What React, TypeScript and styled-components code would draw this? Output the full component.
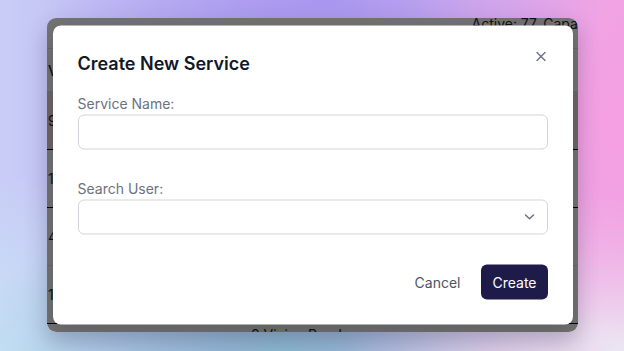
import styled, { createGlobalStyle } from 'styled-components';

const GlobalStyle = createGlobalStyle`
    html, body {
        margin: 0;
        height: 100%;
    }
    body {
        font-family: Inter, "Noto Sans", sans-serif;
        overflow: hidden;
    }
    #root {
        height: 100%;
    }
`;

const rows = [
    { time: '9:12', stop: '14 Harbour Lane', tint: true, line: 'dark' },
    { time: '1:40', stop: '22 Elm Street', tint: false, line: 'dark' },
    { time: '4:05', stop: '3 Mill Road', tint: false, line: 'light' },
    { time: '1:55', stop: '57 Queens Avenue', tint: false, line: 'dark' },
];

export default function App() {
    return (
        <Backdrop>
            <GlobalStyle />
            <AppWindow>
                <StatusBar>
                    <StatusText>Active: 77, Capacity: 120</StatusText>
                </StatusBar>
                <TableHead>
                    <Cell>Vehicle</Cell>
                    <Cell>Address</Cell>
                </TableHead>
                {rows.map(row => (
                    <TableRow key={row.time} $tint={row.tint} $line={row.line}>
                        <Cell>{row.time}</Cell>
                        <Cell>{row.stop}</Cell>
                    </TableRow>
                ))}
                <LastRow>
                    <Cell />
                    <Cell>8 Vivian Road</Cell>
                </LastRow>

                <Dimmer />

                <Dialog>
                    <DialogHeader>
                        <Title>Create New Service</Title>
                        <CloseButton aria-label="Close">
                            <svg width="10" height="10" viewBox="0 0 10 10">
                                <path d="M1 1L9 9M9 1L1 9" stroke="#6b7280" strokeWidth="1.4" strokeLinecap="round" />
                            </svg>
                        </CloseButton>
                    </DialogHeader>

                    <Field>
                        <Label>Service Name:</Label>
                        <TextInput />
                    </Field>

                    <Field>
                        <Label>Search User:</Label>
                        <SelectBox>
                            <svg width="11" height="7" viewBox="0 0 11 7">
                                <path d="M1.5 1.5L5.5 5.2L9.5 1.5" stroke="#6b7280" strokeWidth="1.5" fill="none" strokeLinecap="round" strokeLinejoin="round" />
                            </svg>
                        </SelectBox>
                    </Field>

                    <Actions>
                        <GhostButton>Cancel</GhostButton>
                        <PrimaryButton>Create</PrimaryButton>
                    </Actions>
                </Dialog>
            </AppWindow>
        </Backdrop>
    );
}

const Backdrop = styled('div')`
    height: 100%;
    box-sizing: border-box;
    padding: 18px 46px 19px 47px;
    display: flex;
    background:
        radial-gradient(ellipse 45% 50% at 52% 0%, #a997ef 0%, rgba(169, 151, 239, 0) 100%),
        radial-gradient(ellipse 40% 60% at 100% 35%, #f49fe2 0%, rgba(244, 159, 226, 0) 100%),
        radial-gradient(ellipse 45% 45% at 100% 100%, #ebe6f2 0%, rgba(235, 230, 242, 0) 100%),
        radial-gradient(ellipse 50% 45% at 45% 100%, #8dbad2 0%, rgba(141, 186, 210, 0) 100%),
        radial-gradient(ellipse 40% 50% at 0% 100%, #c7e2f6 0%, rgba(199, 226, 246, 0) 100%),
        linear-gradient(90deg, #c9cdf6 0%, #b6a8f0 45%, #e6b4ec 75%, #f0a6e3 100%);
`;

const AppWindow = styled('div')`
    position: relative;
    flex: 1;
    overflow: hidden;
    border-radius: 9px;
    background: #ffffff;
    box-shadow: 0 10px 22px rgba(40, 40, 70, 0.28);
    font-size: 14px;
    color: #1f2937;
`;

const StatusBar = styled('div')`
    height: 30px;
    display: flex;
    justify-content: flex-end;
    align-items: flex-start;
    border-bottom: 1px solid #e5e7eb;
`;

const StatusText = styled('span')`
    white-space: nowrap;
    margin-right: -55px;
    margin-top: -3px;
    font-size: 14px;
    line-height: 17px;
`;

const TableHead = styled('div')`
    display: grid;
    grid-template-columns: 203px 1fr;
    align-items: center;
    height: 41px;
    padding-top: 1px;
    border-bottom: 1px solid #e5e7eb;
    font-weight: 500;
`;

const TableRow = styled('div')<{ $tint: boolean; $line: string }>`
    display: grid;
    grid-template-columns: 203px 1fr;
    align-items: center;
    height: 57px;
    background: ${p => (p.$tint ? '#f7e0e0' : '#ffffff')};
    border-bottom: 1px solid ${p => (p.$line === 'dark' ? '#000000' : '#e5e7eb')};
`;

const LastRow = styled(TableRow).attrs({ $tint: false, $line: 'light' })`
    align-items: start;
    padding-top: 2px;
`;

const Cell = styled('div')`
    padding-left: 1px;
    white-space: nowrap;
`;

const Dimmer = styled('div')`
    position: absolute;
    inset: 0;
    background: rgba(0, 0, 0, 0.55);
`;

const Dialog = styled('div')`
    position: absolute;
    top: 50%;
    left: 50%;
    transform: translate(-50%, -50%);
    width: 520px;
    box-sizing: border-box;
    padding: 24px 25px 25px;
    background: #ffffff;
    border-radius: 8px;
    box-shadow: 0 8px 24px rgba(0, 0, 0, 0.18);
    display: flex;
    flex-direction: column;
`;

const DialogHeader = styled('div')`
    display: flex;
    justify-content: space-between;
    align-items: flex-start;
    margin-bottom: 16px;
`;

const Title = styled('h2')`
    margin: 0;
    font-size: 18px;
    line-height: 28px;
    font-weight: 600;
    color: #111827;
`;

const CloseButton = styled('button')`
    border: none;
    background: none;
    padding: 0;
    margin: 1px 1px 0 0;
    width: 12px;
    height: 12px;
    display: flex;
    align-items: center;
    justify-content: center;
    cursor: pointer;
`;

const Field = styled('div')`
    display: flex;
    flex-direction: column;
    margin-bottom: 29px;
`;

const Label = styled('label')`
    font-size: 14px;
    line-height: 20px;
    color: #6b7280;
    margin-bottom: 1px;
`;

const TextInput = styled('input')`
    height: 35px;
    box-sizing: border-box;
    border: 1px solid #d1d5db;
    border-radius: 6px;
    padding: 0 12px;
    font-size: 14px;
    font-family: inherit;
    outline: none;
`;

const SelectBox = styled('div')`
    height: 35px;
    box-sizing: border-box;
    border: 1px solid #d1d5db;
    border-radius: 6px;
    padding: 0 12px;
    display: flex;
    align-items: center;
    justify-content: flex-end;
`;

const Actions = styled('div')`
    display: flex;
    justify-content: flex-end;
    align-items: center;
    gap: 9px;
    margin-top: 1px;
`;

const GhostButton = styled('button')`
    border: none;
    background: none;
    font-family: inherit;
    font-size: 14px;
    color: #4b5563;
    height: 35px;
    padding: 0 12px;
    cursor: pointer;
`;

const PrimaryButton = styled('button')`
    border: none;
    background: #1e1b4b;
    color: #ffffff;
    font-family: inherit;
    font-size: 14px;
    height: 35px;
    padding: 0 11px;
    border-radius: 6px;
    cursor: pointer;
`;
